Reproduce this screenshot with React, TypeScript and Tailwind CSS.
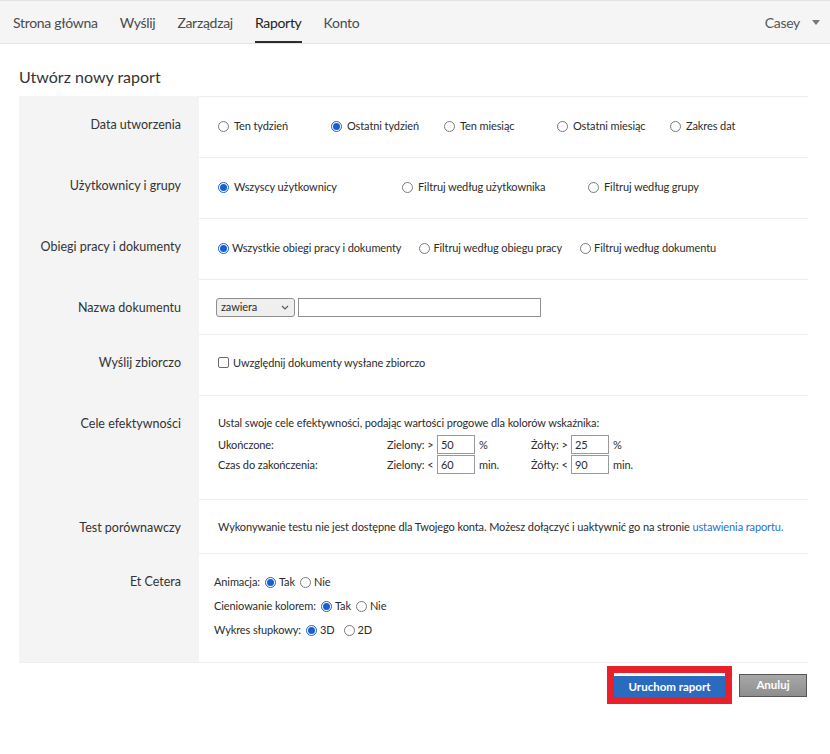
import React from 'react';

const font = { fontFamily: 'Lato, "Liberation Sans", sans-serif' };

function Radio({ checked }: { checked?: boolean }) {
  if (checked) {
    return (
      <span className="inline-flex h-[11px] w-[11px] shrink-0 items-center justify-center rounded-full border border-[#1a5fd0] bg-white">
        <span className="h-[7px] w-[7px] rounded-full bg-[#1a5fd0]" />
      </span>
    );
  }
  return <span className="inline-block h-[11px] w-[11px] shrink-0 rounded-full border border-[#7a7a7a] bg-white" />;
}

function Opt({ label, checked, className = '', gap = 'gap-[5px]' }: { label: string; checked?: boolean; className?: string; gap?: string }) {
  return (
    <span className={`flex items-center ${gap} ${className}`}>
      <Radio checked={checked} />
      <span>{label}</span>
    </span>
  );
}

function Row({ label, h, children, className = '' }: { label: string; h: string; children: React.ReactNode; className?: string }) {
  return (
    <div className={`flex ${h}`}>
      <div className="w-[180px] shrink-0 bg-[#f4f4f4] pt-[19px] pr-[18px] text-right text-[12.5px] leading-[20px] text-[#333]">
        {label}
      </div>
      <div className={`flex-1 border-t border-[#eeeeee] text-[11px] tracking-[-0.1px] text-[#2c2c2c] ${className}`}>
        {children}
      </div>
    </div>
  );
}

function Threshold({ label, value, unit, lw }: { label: string; value: string; unit: string; lw: string }) {
  return (
    <span className="flex items-center">
      <span className={lw}>{label}</span>
      <span className="ml-[2px] inline-flex h-[19px] w-[38px] items-center border border-[#9a9a9a] bg-white px-[3px]">
        {value}
      </span>
      <span className="ml-[4px]">{unit}</span>
    </span>
  );
}

const navItems = ['Strona główna', 'Wyślij', 'Zarządzaj', 'Raporty', 'Konto'];

export default function App() {
  return (
    <div className="min-h-[754px] w-[830px] bg-white" style={font}>
      <header className="flex h-[44px] items-stretch justify-between border-y border-[#e3e3e3] bg-[#f5f5f5] pl-[13px] pr-[10px] text-[14px] tracking-[-0.3px] text-[#4b4b4b]">
        <nav className="flex gap-[22px]">
          {navItems.map((n) => (
            <span
              key={n}
              className={`flex items-center border-b-2 pt-[2px] ${n === 'Raporty' ? 'border-[#2c2c2c] text-[#222]' : 'border-transparent'}`}
            >
              {n}
            </span>
          ))}
        </nav>
        <div className="flex items-center gap-[12px] text-[#555]">
          <span>Casey</span>
          <span className="h-0 w-0 border-x-[4px] border-t-[5px] border-x-transparent border-t-[#777]" />
        </div>
      </header>

      <main className="pl-[19px] pr-[22px]">
        <h1 className="pt-[22px] pb-[8px] text-[16px] leading-[22px] text-[#333]">Utwórz nowy raport</h1>

        <div className="border-b border-[#eeeeee]">
          <Row label="Data utworzenia" h="h-[61px]" className="flex items-start pt-[21px] pl-[19px]">
            <Opt className="w-[113px]" label="Ten tydzień" />
            <Opt className="w-[113px]" label="Ostatni tydzień" checked />
            <Opt className="w-[113px]" label="Ten miesiąc" />
            <Opt className="w-[113px]" label="Ostatni miesiąc" />
            <Opt label="Zakres dat" />
          </Row>
          <Row label="Użytkownicy i grupy" h="h-[61px]" className="flex items-start pt-[21px] pl-[19px]">
            <Opt className="w-[184px]" label="Wszyscy użytkownicy" checked />
            <Opt className="w-[186px]" label="Filtruj według użytkownika" />
            <Opt label="Filtruj według grupy" />
          </Row>
          <Row label="Obiegi pracy i dokumenty" h="h-[61px]" className="flex items-start gap-[18px] pt-[21px] pl-[19px]">
            <Opt gap="gap-[3px]" label="Wszystkie obiegi pracy i dokumenty" checked />
            <Opt gap="gap-[3px]" label="Filtruj według obiegu pracy" />
            <Opt gap="gap-[3px]" label="Filtruj według dokumentu" />
          </Row>
          <Row label="Nazwa dokumentu" h="h-[55px]" className="flex items-start gap-[3px] pt-[18px] pl-[17px]">
            <span className="flex h-[19px] w-[79px] items-center justify-between rounded-[3px] border border-[#8f8f8f] bg-[#efefef] pl-[4px] pr-[5px]">
              zawiera
              <svg width="8" height="5" viewBox="0 0 8 5" fill="none" stroke="#555" strokeWidth="1.1">
                <path d="M1 1l3 3 3-3" />
              </svg>
            </span>
            <span className="h-[19px] w-[243px] border border-[#8f8f8f] bg-white" />
          </Row>
          <Row label="Wyślij zbiorczo" h="h-[61px]" className="flex items-start gap-[4px] pt-[20px] pl-[19px]">
            <span className="mt-[2px] h-[11px] w-[11px] rounded-[2px] border border-[#6a6a6a] bg-white" />
            <span>Uwzględnij dokumenty wysłane zbiorczo</span>
          </Row>
          <Row label="Cele efektywności" h="h-[104px]" className="pt-[19px] pl-[19px]">
            <div className="leading-[16px]">Ustal swoje cele efektywności, podając wartości progowe dla kolorów wskaźnika:</div>
            <div className="mt-[4px] grid grid-cols-[169px_144px_auto] items-center gap-y-[1px] leading-[19px]">
              <span>Ukończone:</span>
              <Threshold label="Zielony: >" value="50" unit="%" lw="w-[48px]" />
              <Threshold label="Żółty: >" value="25" unit="%" lw="w-[38px]" />
              <span>Czas do zakończenia:</span>
              <Threshold label="Zielony: <" value="60" unit="min." lw="w-[48px]" />
              <Threshold label="Żółty: <" value="90" unit="min." lw="w-[38px]" />
            </div>
          </Row>
          <Row label="Test porównawczy" h="h-[54px]" className="pt-[19px] pl-[19px] leading-[16px] whitespace-nowrap">
            Wykonywanie testu nie jest dostępne dla Twojego konta. Możesz dołączyć i uaktywnić go na stronie{' '}
            <a className="text-[#2a6fc9]">ustawienia raportu.</a>
          </Row>
          <Row label="Et Cetera" h="h-[109px]" className="flex flex-col gap-[8px] pt-[20px] pl-[15px] leading-[16px]">
            <div className="flex items-center gap-[5px]">
              Animacja:
              <Opt gap="gap-[3px]" label="Tak" checked />
              <Opt gap="gap-[3px]" label="Nie" />
            </div>
            <div className="flex items-center gap-[5px]">
              Cieniowanie kolorem:
              <Opt gap="gap-[3px]" label="Tak" checked />
              <Opt gap="gap-[3px]" label="Nie" />
            </div>
            <div className="flex items-center gap-[5px]">
              Wykres słupkowy:
              <Opt gap="gap-[3px]" label="3D" checked />
              <Opt gap="gap-[3px]" className="ml-[4px]" label="2D" />
            </div>
          </Row>
        </div>

        <div className="flex items-center justify-end gap-[7px] pt-[3px] pr-[1px]">
          <div className="border-[7px] border-[#e8202a]">
            <button className="h-[21px] w-[111px] bg-[#2a6bc0] text-[11.5px] font-bold text-white">Uruchom raport</button>
          </div>
          <button className="h-[23px] w-[68px] border border-[#555] bg-gradient-to-b from-[#a8a8a8] to-[#8e8e8e] text-[11.5px] font-bold text-white">
            Anuluj
          </button>
        </div>
      </main>
    </div>
  );
}
